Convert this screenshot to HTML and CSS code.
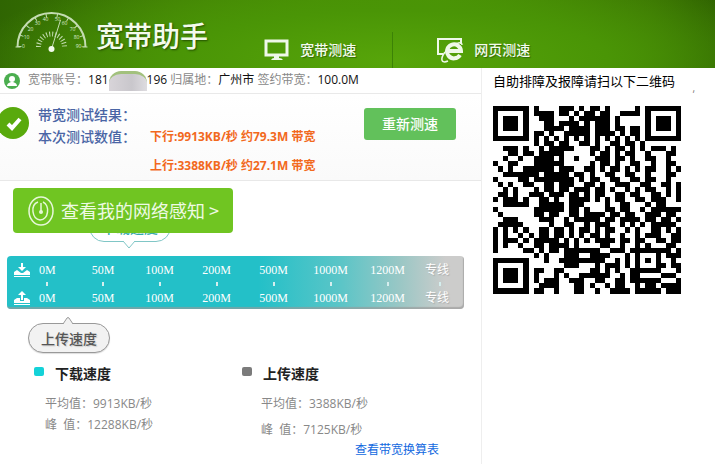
FILE: index.html
```html
<!DOCTYPE html>
<html lang="zh-CN">
<head>
<meta charset="utf-8">
<title>宽带助手</title>
<link rel="stylesheet" href="styles.css">
</head>
<body>
<header class="top">
  <div class="brand">
    <svg class="gauge" viewBox="0 0 72 44" aria-hidden="true">
      <g fill="none" stroke="#c4dcb2">
        <path d="M2 36A34 34 0 0 1 70 36" stroke-width="2"/>
        <path d="M4 36A32 32 0 0 1 68 36" stroke-width="4" stroke-dasharray="1 10.1"/>
        <path d="M23 36A13 13 0 0 1 49 36" stroke-width="5" stroke-dasharray="1 2"/>
        <path d="M36 38L45 9" stroke-width="1"/>
        <path d="M0 36h5M67 36h5" stroke-width="1"/>
      </g>
      <circle cx="36" cy="38" r="3" fill="#f2faeb"/>
      <g class="gauge-num">
        <text x="11" y="28">10</text><text x="15" y="20">20</text><text x="22" y="14">30</text><text x="30" y="10">40</text><text x="42" y="10">50</text><text x="49" y="14">60</text><text x="57" y="20">70</text><text x="61" y="28">80</text><text x="8" y="37">0</text><text x="63" y="37">90</text>
      </g>
    </svg>
    <h1>宽带助手</h1>
  </div>
  <nav class="tabs">
    <a href="#speed"><svg width="26" height="24" viewBox="0 0 26 24" aria-hidden="true"><path d="M3 3h21v14H3z" fill="none" stroke="#eff8e9" stroke-width="3"/><path d="M8 22q1-2 3-2v-2h5v2q3 0 4 2z" fill="#eff8e9"/></svg>宽带测速</a>
    <a href="#web"><svg width="26" height="28" viewBox="0 0 26 28" aria-hidden="true"><path d="M6 18H1V3h23v5" fill="none" stroke="#eff8e9" stroke-width="2"/><path d="M23 19a7 7 0 1 1 1-4H11" fill="none" stroke="#eff8e9" stroke-width="4"/><path d="M8 16C3 23 4 28 11 25M19 8q6-3 6 1" fill="none" stroke="#eff8e9" stroke-width="1.5"/></svg>网页测速</a>
  </nav>
</header>
<main class="page">
  <section class="left">
    <div class="account">
      <svg width="16" height="16" viewBox="0 0 16 16" aria-hidden="true"><circle cx="8" cy="8" r="8" fill="#4bae4f"/><circle cx="8" cy="6" r="3" fill="#fff"/><path d="M3 13q0-3 4-4h2q4 1 4 4z" fill="#fff"/></svg>
      <p>宽带账号：<b>181<span class="mask"></span>196</b> 归属地：<b>广州市</b> 签约带宽：<b>100.0M</b></p>
    </div>
    <div class="result">
      <svg class="check" width="29" height="32" viewBox="0 0 29 32" aria-hidden="true"><circle cx="13" cy="16" r="16" fill="#59aa0d"/><path d="M8 17l4 4 8-9" fill="none" stroke="#fff" stroke-width="4"/></svg>
      <div class="result-text">
        <h2>带宽测试结果：</h2>
        <div class="values"><h2>本次测试数值：</h2><p>下行:9913KB/秒 约79.3M 带宽<br>上行:3388KB/秒 约27.1M 带宽</p></div>
      </div>
      <button class="retest" type="button">重新测速</button>
    </div>
    <div class="sense">
      <button type="button"><svg width="28" height="32" viewBox="0 0 28 32" aria-hidden="true"><g fill="none" stroke="#e6f7d9"><ellipse cx="14" cy="16" rx="12" ry="14" stroke-width="1.5"/><path d="M11 7C3 10 5 24 13 25c9 0 10-15 3-18" stroke-width="1.5"/><path d="M14 8v9" stroke-width="1.5"/></g><circle cx="14" cy="17" r="2" fill="#e6f7d9"/></svg>查看我的网络感知 &gt;</button>
      <div class="bubble down">下载速度<svg width="14" height="9" viewBox="0 0 14 9" aria-hidden="true"><path d="M1 0l6 7 6-7" fill="#fff" stroke="#80c6c6"/></svg></div>
    </div>
    <div class="scale">
      <div class="scale-row">
        <span class="first"><svg width="18" height="15" viewBox="0 0 18 15" aria-hidden="true"><path d="M1 9l3-2 4 3h2l4-3 3 2v3H1zM1 13h16v1H1zM8 0h2v4h3L9 8 5 4h3z" fill="#fff"/></svg>0M</span><span>50M</span><span>100M</span><span>200M</span><span>500M</span><span>1000M</span><span>1200M</span><span class="line">专线</span>
      </div>
      <div class="scale-row ticks"><i class="first"></i><i></i><i></i><i></i><i></i><i></i><i></i><i></i></div>
      <div class="scale-row">
        <span class="first"><svg width="18" height="15" viewBox="0 0 18 15" aria-hidden="true"><path d="M1 9l3-2h3v3h4V7h3l3 2v3H1zM1 13h16v1H1zM8 9h2V4h3L9 0 5 4h3z" fill="#fff"/></svg>0M</span><span>50M</span><span>100M</span><span>200M</span><span>500M</span><span>1000M</span><span>1200M</span><span class="line">专线</span>
      </div>
    </div>
    <div class="bubble up"><svg width="12" height="8" viewBox="0 0 12 8" aria-hidden="true"><path d="M1 8l4-6q1-1 2 0l4 6" fill="#f2f2f2" stroke="#999"/></svg>上传速度</div>
    <div class="stats">
      <div class="stat">
        <h3>下载速度</h3>
        <p>平均值：9913KB/秒</p>
        <p>峰&nbsp; 值：12288KB/秒</p>
      </div>
      <div class="stat upload">
        <h3>上传速度</h3>
        <p>平均值：3388KB/秒</p>
        <p>峰&nbsp; 值：7125KB/秒</p>
        <a href="#table">查看带宽换算表</a>
      </div>
    </div>
  </section>
  <aside class="right">
    <p>自助排障及报障请扫以下二维码</p>
    <svg class="qr" viewBox="0 0 37 37" role="img" aria-label="二维码" shape-rendering="crispEdges"><path id="modules"/></svg>
    <span class="dot">,</span>
  </aside>
</main>
<script src="qr.js"></script>
</body>
</html>
```
FILE: styles.css
```css
* { box-sizing: border-box; }
body {
  margin: 0;
  background: #fff;
  color: #000;
  font: 12px/20px "Open Sans", "Noto Sans CJK SC", sans-serif;
}
h1, h2, h3, p { margin: 0; }
button { border: 0; font: inherit; color: #fff; cursor: pointer; }
svg { flex: none; }

.top {
  display: flex;
  height: 68px;
  background:
    radial-gradient(ellipse 60% 150% at 55% 90%, #57a50a 0%, #4a9506 50%, transparent 100%),
    linear-gradient(100deg, #2f6502 0%, #417f04 25%, #4b9305 60%, #397002 90%, #2c5d00 100%);
}
.brand { display: flex; flex: 0 0 35%; padding: 11px 0 0 15px; gap: 8px; }
.gauge { width: 73px; height: 44px; }
.gauge-num { fill: #dcebd0; font-size: 5px; text-anchor: middle; }
h1 {
  color: #f4fbed;
  font: 500 28px/48px "Noto Sans CJK SC", sans-serif;
  text-shadow: 1px 1px 2px #235000;
  white-space: nowrap;
}
.tabs { display: flex; flex: 1; padding-top: 32px; }
.tabs a {
  display: flex;
  flex: 0 0 142px;
  align-items: center;
  gap: 11px;
  padding-left: 13px;
  color: #f4fbed;
  font-size: 14px;
  font-weight: 500;
  line-height: 30px;
  text-decoration: none;
  text-shadow: 1px 1px 1px #326c05;
  white-space: nowrap;
}
.tabs a + a { flex-grow: 1; padding-left: 44px; border-left: 1px solid #3c8206; }

.page { display: flex; min-height: calc(100vh - 68px); }
.left { flex: 0 0 482px; border-right: 1px solid #eee; }
.right { position: relative; flex: 1; min-width: 0; padding: 3px 0 0 11px; }
.right p { font: 13px/20px "Noto Sans CJK SC", sans-serif; white-space: nowrap; }
.qr { display: block; width: 188px; height: 189px; margin-top: 14px; }
.dot { position: absolute; top: 10px; right: 20px; color: #777; font-size: 10px; }

.account {
  display: flex;
  align-items: center;
  gap: 8px;
  height: 26px;
  padding-left: 4px;
  border-bottom: 1px solid #e9e9e9;
  color: #888;
  white-space: nowrap;
}
.account b { color: #111; font-weight: 400; }
.mask {
  display: inline-block;
  width: 38px;
  height: 20px;
  border-top: 3px solid #a2c17d;
  border-radius: 12px 12px 0 0;
  background: linear-gradient(90deg, #d8d4d9, #c9c7cc 60%, #dedce0);
  vertical-align: middle;
}

.result {
  display: flex;
  height: 87px;
  border-bottom: 1px solid #e8e8e8;
  background: linear-gradient(#fff, #fafafa);
}
.check { margin-top: 13px; }
.result-text { flex: 1; padding: 9px 0 0 9px; white-space: nowrap; }
h2 { color: #4a65a5; font: 500 14px/22px "Noto Sans CJK SC", sans-serif; }
.values { display: flex; }
.values p { padding-left: 14px; color: #f2691d; font-size: 12px; font-weight: 700; line-height: 29px; margin-top: -3px; }
.retest {
  width: 92px;
  height: 32px;
  margin: 14px 25px 0 0;
  padding: 0;
  border-radius: 3px;
  background: #62c15b;
  font-size: 14px;
  font-weight: 500;
}

.sense { position: relative; height: 75px; padding: 7px 13px; }
.sense button {
  position: relative;
  z-index: 1;
  display: flex;
  align-items: center;
  gap: 6px;
  width: 220px;
  height: 45px;
  padding: 0 0 0 14px;
  border-radius: 4px;
  background: #70c522;
  color: #eefae4;
  font: 18px/45px "Noto Sans CJK SC", sans-serif;
  white-space: nowrap;
}
.bubble {
  position: relative;
  width: 82px;
  height: 30px;
  border: 1px solid #999;
  border-radius: 15px;
  background: #f2f2f2;
  color: #555;
  font: 500 14px/28px "Noto Sans CJK SC", sans-serif;
  text-align: center;
}
.bubble svg { position: absolute; }
.down { position: absolute; top: 31px; left: 89px; border-color: #80c6c6; background: #fff; color: #35aaaa; }
.down svg { top: 28px; left: 32px; }
.up { margin: 14px 0 0 28px; box-shadow: 0 1px 1px #ddd; text-shadow: 1px 1px 1px #ccc; }
.up svg { top: -8px; left: 33px; }

.scale {
  margin: 0 17px 0 7px;
  padding: 4px 0;
  height: 53px;
  border-radius: 4px;
  background: linear-gradient(90deg, #23c0c8 55%, #5bc5c7 73%, #9ac7c5 86%, #cccccb 96%);
  box-shadow: inset -1px -2px 1px #999a;
  color: #fff;
  font: 12px/20px "Liberation Serif", "Noto Sans CJK SC", serif;
}
.scale-row {
  display: grid;
  grid-template-columns: 68fr 56fr repeat(5, 57fr) 48fr;
  align-items: center;
  text-align: center;
}
.scale-row .first { display: flex; align-items: center; gap: 8px; padding-left: 6px; }
.scale-row .line { padding-right: 6px; text-shadow: 1px 1px 1px #aaa; }
.ticks { height: 8px; }
.ticks i { justify-self: center; width: 2px; height: 4px; background: #d5eeee; }
.ticks i.first { justify-self: start; margin-left: 39px; padding: 0; }

.stats { display: flex; padding: 10px 0 0 34px; }
.stat { flex: 0 0 208px; color: #888; white-space: nowrap; }
.stat h3 {
  display: flex;
  align-items: center;
  gap: 11px;
  margin-bottom: 10px;
  color: #222;
  font: 700 14px/20px "Noto Sans CJK SC", sans-serif;
}
.stat h3::before { content: ""; width: 10px; height: 9px; margin-bottom: 3px; border-radius: 2px; background: #14d2d8; }
.stat p { padding-left: 11px; line-height: 21px; }
.upload p { padding-left: 19px; }
.upload p + p { margin-top: 5px; }
.upload h3::before { background: #7b7b7b; }
.upload a { display: block; margin-left: 113px; color: #1269df; text-decoration: none; }
```
FILE: qr.js
```js
// One string per row of modules; "#" is a dark module.
const rows = [
  "#######.#....###.#.##.#.....#.#######",
  "#.....#.####.##.#.##.##..####.#.....#",
  "#.###.#..###...#.######.#.....#.###.#",
  "#.###.#...##.####.#.###.#.....#.###.#",
  "#.###.#...####.####.###.##.##.#.###.#",
  "#.....#.##.#..#####.####.#.##.#.....#",
  "#######.#.#.#.#.#.#.#.#.#.#.#.#######",
  "........#.##.##..##.#..##.##.#.......",
  "..###.#..#.#####...##.#.##.#.#.###.#.",
  "...##.##.#####.....#.##.#.##..#...##.",
  "..#..#..####.#..#...###.##.#..##..#..",
  "#..##...######.....#.##.#..##..#..##.",
  ".#.#..######.###..##.#.##.#.#.##..#.#",
  "..#######.#####.##.#..##..##..#...##.",
  "#....##.########.#.##..##..##.##..#..",
  ".#.#..##..##.###..##.#..###..##..##.#",
  "..#.#...#.##.##.###.##.#..#.#.##..#.#",
  ".##.#..###.###.##.#.##..##.##..##.#.#",
  "#.###.#..##.#..####.#.#.##..##.###..#",
  "..#####..#####.###....#..##...#.##...",
  "#.......######.##.#...##.##..#.######",
  ".#......##.##..##.####.##.##..###.##.",
  "..###....###..#.#####.##.####.##.##.#",
  ".#####.....#..##..#.###..#.#.#.#####.",
  "#.#.#.#..##.##.#.##.#.##..#.#..##.#.#",
  "#.#..#.#.##.##.#.#.##.#..#..#.###..##",
  "#.###.#.#####.#.#.#.####.##.##..##.##",
  "#.#..#..##.####.#....##..#..#.#...##.",
  "#.....##.#.##.#######..###.########.#",
  "........#.#...###..####...#.#...#.###",
  "#######...#..#########..#.#.#.#.#..#.",
  "#.....#.......###...#.###.#.#...##.##",
  "#.###.#.##..##.....##.#.#..######...#",
  "#.###.#.#...#.#..######..#.##....###.",
  "#.###.#.#.###..###..##..##.######...#",
  "#.....#..####...##.#..#.##..#.##.####",
  "#######.##..#...##..#..####.#####.###"
];
let d = "";
rows.forEach((row, y) => {
  [...row].forEach((cell, x) => {
    if (cell === "#") d += `M${x} ${y}h1v1h-1z`;
  });
});
document.getElementById("modules").setAttribute("d", d);
```
